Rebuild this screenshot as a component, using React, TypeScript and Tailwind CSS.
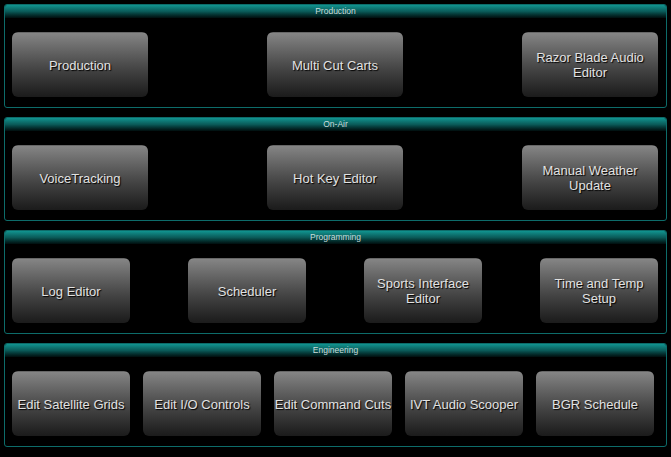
import React from 'react';

type Section = {
  title: string;
  items: string[];
  kind: 'three' | 'four' | 'five';
};

const sections: Section[] = [
  { title: 'Production', items: ['Production', 'Multi Cut Carts', 'Razor Blade Audio Editor'], kind: 'three' },
  { title: 'On-Air', items: ['VoiceTracking', 'Hot Key Editor', 'Manual Weather Update'], kind: 'three' },
  { title: 'Programming', items: ['Log Editor', 'Scheduler', 'Sports Interface Editor', 'Time and Temp Setup'], kind: 'four' },
  {
    title: 'Engineering',
    items: ['Edit Satellite Grids', 'Edit I/O Controls', 'Edit Command Cuts', 'IVT Audio Scooper', 'BGR Schedule'],
    kind: 'five',
  },
];

const widthByKind = {
  three: 'w-[136px] px-2',
  four: 'w-[118px] px-2',
  five: 'w-[118px] px-0 whitespace-nowrap',
};

const rowByKind = {
  three: 'justify-between',
  four: 'justify-between',
  five: 'justify-start gap-[13px]',
};

const TileButton: React.FC<{ label: string; width: string }> = ({ label, width }) => (
  <button
    className={`${width} h-[65px] shrink-0 rounded-[6px] bg-gradient-to-b from-[#858585] via-[#4b4b4b] to-[#1b1b1b] border-t border-[#9a9a9a]/60 flex items-center justify-center text-center text-[13px] leading-[15px] text-[#e2e2e2] [text-shadow:1px_1px_1px_#000]`}
  >
    {label}
  </button>
);

export default function App() {
  return (
    <div className="w-[671px] h-[457px] bg-black flex flex-col gap-[9px] pt-[4px] px-[4px] font-['Liberation_Sans',Arial,sans-serif] overflow-hidden">
      {sections.map((s) => (
        <div key={s.title} className="h-[104px] w-[663px] shrink-0 border border-[#0d6c6a] rounded-[3px] flex flex-col overflow-hidden">
          {/* header strip */}
          <div className="h-[13px] bg-gradient-to-b from-[#119490] via-[#0a5a58] to-[#010e0e] flex items-center justify-center text-[8.5px] leading-none text-[#c9dcdc]">
            {s.title}
          </div>
          <div className={`flex pl-[7px] pr-[8px] pt-[14px] ${rowByKind[s.kind]}`}>
            {s.items.map((it) => (
              <TileButton key={it} label={it} width={widthByKind[s.kind]} />
            ))}
          </div>
        </div>
      ))}
    </div>
  );
}
